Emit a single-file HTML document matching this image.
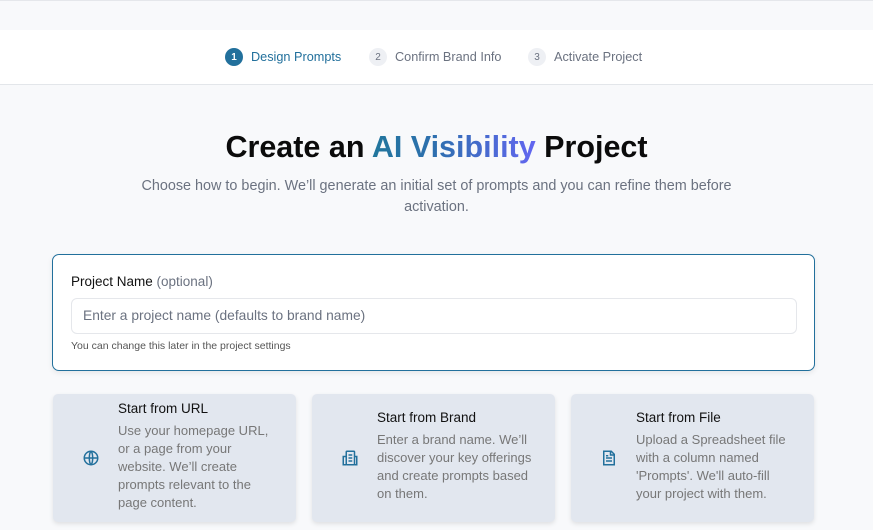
<!DOCTYPE html><html><head><style>
*{box-sizing:border-box;margin:0;padding:0}
body{width:873px;height:530px;overflow:hidden;background:#f8f9fb;font-family:"Liberation Sans",sans-serif;position:relative}
.top{position:absolute;top:0;left:0;right:0;height:1px;background:#e5e7eb}
.hdr{position:absolute;top:30px;left:0;right:0;height:55px;background:#fff;border-bottom:1px solid #e3e6ea}
.st{position:absolute;top:18px;display:flex;align-items:center;font-size:12.7px;color:#6b7280}
.n{width:18px;height:18px;border-radius:50%;background:#eef0f4;color:#6b7280;font-size:10px;display:flex;align-items:center;justify-content:center;margin-right:8px}
h1{position:absolute;top:130px;left:0;width:873px;text-align:center;font-size:30.5px;font-weight:bold;color:#0b0b0b}
.g{background:linear-gradient(90deg,#21769c,#2f6fb0 40%,#6366f1);-webkit-background-clip:text;color:transparent}
.sub{position:absolute;top:176px;left:130px;width:613px;text-align:center;font-size:14.4px;line-height:21px;color:#6b7280}
.card{position:absolute;left:52px;top:254px;width:763px;height:117px;background:#fff;border:1px solid #22709c;border-radius:7px;box-shadow:0 2px 6px rgba(0,0,0,.08)}
.lbl{position:absolute;left:18px;top:19px;font-size:13.5px;color:#111}
.lbl span{color:#6b7280}
.inp{position:absolute;left:18px;top:43px;width:726px;height:36px;border:1px solid #e5e7eb;border-radius:6px;font-size:13.8px;color:#6b7280;padding:9px 11px}
.hlp{position:absolute;left:18px;top:85px;font-size:10.5px;color:#555}
.opt{position:absolute;top:394px;width:243px;height:128px;background:#e2e7ef;border-radius:5px;box-shadow:0 2px 5px rgba(0,0,0,.1)}
.opt h3{position:absolute;left:65px;font-size:13.5px;font-weight:normal;color:#111}
.opt p{position:absolute;left:65px;width:153px;font-size:13px;line-height:18px;color:#777}
.opt svg{position:absolute;left:29px;top:55px}
</style></head><body>
<div class="top"></div>
<div class="hdr">
<div class="st" style="left:225px;color:#22709c"><div class="n" style="background:#22709c;color:#fff;font-weight:bold">1</div>Design Prompts</div>
<div class="st" style="left:369px"><div class="n">2</div>Confirm Brand Info</div>
<div class="st" style="left:528px"><div class="n">3</div>Activate Project</div>
</div>
<h1>Create an <span class="g">AI Visibility</span> Project</h1>
<div class="sub">Choose how to begin. We’ll generate an initial set of prompts and you can refine them before activation.</div>
<div class="card"><div class="lbl">Project Name <span>(optional)</span></div>
<div class="inp">Enter a project name (defaults to brand name)</div>
<div class="hlp">You can change this later in the project settings</div></div>
<div class="opt" style="left:53px"><h3 style="top:7px">Start from URL</h3><p style="top:28px">Use your homepage URL, or a page from your website. We’ll create prompts relevant to the page content.</p>
<svg width="18" height="18" viewBox="0 0 24 24" fill="none" stroke="#22709c" stroke-width="2"><circle cx="12" cy="12" r="9"/><path d="M3 12h18M12 3c3 3 3 15 0 18M12 3c-3 3-3 15 0 18"/></svg></div>
<div class="opt" style="left:312px"><h3 style="top:16px">Start from Brand</h3><p style="top:37px;width:162px">Enter a brand name. We’ll discover your key offerings and create prompts based on them.</p>
<svg width="18" height="18" viewBox="0 0 24 24" fill="none" stroke="#22709c" stroke-width="2"><rect x="7" y="3" width="11" height="18" rx="1"/><path d="M7 10H3v11h4M18 10h3v11h-3M10 8h5M10 12h5M10 16h5"/></svg></div>
<div class="opt" style="left:571px"><h3 style="top:16px">Start from File</h3><p style="top:37px">Upload a Spreadsheet file with a column named 'Prompts'. We'll auto-fill your project with them.</p>
<svg width="18" height="18" viewBox="0 0 24 24" fill="none" stroke="#22709c" stroke-width="2"><path d="M5 3h10l4 4v14H5z"/><path d="M14 3v5h5M8 12h8M8 16h8M8 9h3"/></svg></div>
</body></html>
